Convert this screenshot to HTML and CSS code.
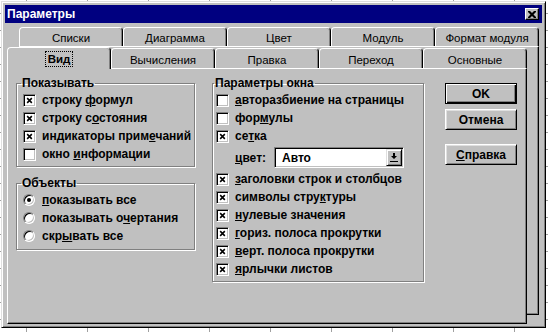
FILE: index.html
```html
<!DOCTYPE html>
<html lang="ru">
<head>
    <meta charset="UTF-8">
    <title>Параметры</title>
    <link rel="stylesheet" href="styles.css">
</head>
<body>
    <div class="window">
        <div class="titlebar">
            <span class="title">Параметры</span>
            <span class="close-btn">
                <svg width="8" height="7" viewBox="0 0 8 7"><path d="M0 0h2l2 2 2-2h2v1l-2.5 2.5 2.5 2.5v1h-2l-2-2-2 2h-2v-1l2.5-2.5-2.5-2.5z" fill="#000"/></svg>
            </span>
        </div>

        <div class="sheets">
            <!-- back row of tabs -->
            <div class="card card-back">
                <div class="tabs">
                    <div class="tab">Списки</div>
                    <div class="tab">Диаграмма</div>
                    <div class="tab">Цвет</div>
                    <div class="tab">Модуль</div>
                    <div class="tab">Формат модуля</div>
                </div>
                <div class="page"></div>
            </div>

            <!-- front row of tabs -->
            <div class="card card-front">
                <div class="tabs tabs-front">
                    <div class="tab tab-active"><span class="focus">Вид</span></div>
                    <div class="tab">Вычисления</div>
                    <div class="tab">Правка</div>
                    <div class="tab">Переход</div>
                    <div class="tab">Основные</div>
                </div>
                <div class="page page-main">
                    <div class="col-left">
                        <fieldset class="group group-left">
                            <legend>Показывать</legend>
                            <div class="row"><span class="cb"><svg viewBox="0 0 9 9"><path d="M1.5 1.5l6 6M7.5 1.5l-6 6"/></svg></span><span>строку <u>ф</u>ормул</span></div>
                            <div class="row"><span class="cb"><svg viewBox="0 0 9 9"><path d="M1.5 1.5l6 6M7.5 1.5l-6 6"/></svg></span><span>строку с<u>о</u>стояния</span></div>
                            <div class="row"><span class="cb"><svg viewBox="0 0 9 9"><path d="M1.5 1.5l6 6M7.5 1.5l-6 6"/></svg></span><span>индикаторы прим<u>е</u>чаний</span></div>
                            <div class="row"><span class="cb"></span><span>окно <u>и</u>нформации</span></div>
                        </fieldset>

                        <fieldset class="group group-left group-objects">
                            <legend>Объекты</legend>
                            <div class="row"><span class="radio on"></span><span><u>п</u>оказывать все</span></div>
                            <div class="row"><span class="radio"></span><span>показывать о<u>ч</u>ертания</span></div>
                            <div class="row"><span class="radio"></span><span>скр<u>ы</u>вать все</span></div>
                        </fieldset>
                    </div>

                    <fieldset class="group group-right">
                        <legend>Параметры окна</legend>
                        <div class="row"><span class="cb"></span><span><u>а</u>вторазбиение на страницы</span></div>
                        <div class="row"><span class="cb"></span><span>фор<u>м</u>улы</span></div>
                        <div class="row"><span class="cb"><svg viewBox="0 0 9 9"><path d="M1.5 1.5l6 6M7.5 1.5l-6 6"/></svg></span><span>се<u>т</u>ка</span></div>
                        <div class="combo-row">
                            <span class="combo-label"><u>ц</u>вет:</span>
                            <span class="combo">
                                <span class="combo-text">Авто</span>
                                <span class="combo-btn">
                                    <svg width="8" height="9" viewBox="0 0 8 9"><path d="M3 0h2v3h2l-3 3-3-3h2z M0 8h8v1h-8z" fill="#000"/></svg>
                                </span>
                            </span>
                        </div>
                        <div class="row"><span class="cb"><svg viewBox="0 0 9 9"><path d="M1.5 1.5l6 6M7.5 1.5l-6 6"/></svg></span><span><u>з</u>аголовки строк и столбцов</span></div>
                        <div class="row"><span class="cb"><svg viewBox="0 0 9 9"><path d="M1.5 1.5l6 6M7.5 1.5l-6 6"/></svg></span><span>символы стру<u>к</u>туры</span></div>
                        <div class="row"><span class="cb"><svg viewBox="0 0 9 9"><path d="M1.5 1.5l6 6M7.5 1.5l-6 6"/></svg></span><span><u>н</u>улевые значения</span></div>
                        <div class="row"><span class="cb"><svg viewBox="0 0 9 9"><path d="M1.5 1.5l6 6M7.5 1.5l-6 6"/></svg></span><span><u>г</u>ориз. полоса прокрутки</span></div>
                        <div class="row"><span class="cb"><svg viewBox="0 0 9 9"><path d="M1.5 1.5l6 6M7.5 1.5l-6 6"/></svg></span><span><u>в</u>ерт. полоса прокрутки</span></div>
                        <div class="row"><span class="cb"><svg viewBox="0 0 9 9"><path d="M1.5 1.5l6 6M7.5 1.5l-6 6"/></svg></span><span><u>я</u>рлычки листов</span></div>
                    </fieldset>

                    <div class="buttons">
                        <button class="btn btn-default">OK</button>
                        <button class="btn">Отмена</button>
                        <button class="btn btn-help"><u>С</u>правка</button>
                    </div>
                </div>
            </div>
        </div>
    </div>
</body>
</html>
```

FILE: styles.css
```css
body {
    margin: 0;
    width: 548px;
    height: 332px;
    overflow: hidden;
    background-color: #fff;
    background-image:
        linear-gradient(to right, #a0a0a0 1px, transparent 1px),
        linear-gradient(to bottom, #a0a0a0 1px, transparent 1px);
    background-size: 61px 17px;
    background-position: 26px 13px;
    font-family: "Liberation Sans", Arial, sans-serif;
    font-size: 11px;
    color: #000;
}
.window {
    margin: 1px 0 0 1px;
    width: 545px;
    height: 327px;
    box-sizing: border-box;
    background: #c0c0c0;
    border: 1px solid;
    border-color: #dfdfdf #000 #000 #dfdfdf;
    box-shadow: inset 1px 1px #fff, inset -1px -1px #808080;
    padding: 3px;
}
.titlebar {
    height: 18px;
    background: #000080;
    display: flex;
    align-items: center;
    justify-content: space-between;
    padding: 0 3px 0 2px;
}
.title {
    color: #fff;
    font-weight: bold;
    font-size: 12px;
}
.close-btn {
    width: 14px;
    height: 12px;
    box-sizing: border-box;
    background: #c0c0c0;
    border: 1px solid;
    border-color: #fff #000 #000 #fff;
    box-shadow: inset -1px -1px #808080;
    display: flex;
    align-items: center;
    justify-content: center;
}
.sheets {
    display: grid;
    padding: 4px 0 0 2px;
}
.card {
    grid-area: 1 / 1;
    display: flex;
    flex-direction: column;
    width: 520px;
}
.card-back {
    margin-left: 12px;
    height: 288px;
}
.card-front {
    margin-top: 20px;
    height: 277px;
}
.tabs {
    display: flex;
    align-items: flex-end;
    height: 19px;
}
.tabs-front {
    height: 21px;
}
.tab {
    width: 104px;
    height: 19px;
    box-sizing: border-box;
    border: 1px solid;
    border-bottom: none;
    border-color: #fff #000 transparent #fff;
    border-radius: 4px 4px 0 0;
    box-shadow: inset -1px 0 #808080;
    display: flex;
    align-items: center;
    justify-content: center;
    padding-top: 2px;
    font-size: 11.5px;
}
.tabs-front .tab {
    height: 20px;
}
.tabs-front .tab-active {
    height: 22px;
    margin-bottom: -1px;
    position: relative;
    z-index: 1;
    background: #c0c0c0;
    font-weight: bold;
    padding-top: 0;
}
.focus {
    border: 1px dotted #000;
    padding: 1px 2px;
}
.page {
    flex: 1;
    border: 1px solid;
    border-color: #fff #000 #000 #fff;
    box-shadow: inset -1px -1px #808080;
    background: #c0c0c0;
}
.page-main {
    display: flex;
    align-items: flex-start;
    padding: 8px 0 0 8px;
}
.col-left {
    width: 179px;
}
.group {
    margin: 0;
    border: 1px solid #808080;
    box-shadow: inset 1px 1px #fff, 1px 1px #fff;
    font-weight: bold;
    font-size: 12px;
}
.group legend {
    padding: 0 1px;
    margin-left: -2px;
    line-height: 13px;
}
.group-left {
    padding: 1px 0 3px 6px;
}
.group-objects {
    margin-top: 10px;
    padding-bottom: 4px;
}
.group-right {
    width: 212px;
    box-sizing: border-box;
    margin-left: 17px;
    padding: 1px 0 3px 3px;
}
.row {
    display: flex;
    align-items: center;
    height: 18px;
    gap: 6px;
    white-space: nowrap;
}
.cb {
    width: 13px;
    height: 13px;
    box-sizing: border-box;
    background: #fff;
    border: 1px solid;
    border-color: #808080 #fff #fff #808080;
    box-shadow: inset 1px 1px #000, inset -1px -1px #c0c0c0;
    padding: 2px;
    flex-shrink: 0;
}
.cb svg {
    display: block;
    width: 7px;
    height: 7px;
    margin: 0;
}
.cb path {
    stroke: #000;
    stroke-width: 2;
    fill: none;
}
.radio {
    width: 12px;
    height: 12px;
    box-sizing: border-box;
    border-radius: 50%;
    background: #fff;
    border: 1px solid;
    border-color: #808080 #fff #fff #808080;
    box-shadow: inset 1px 1px #000, inset -1px -1px #c0c0c0;
    display: flex;
    align-items: center;
    justify-content: center;
    flex-shrink: 0;
    margin-right: 1px;
}
.radio.on::after {
    content: "";
    width: 4px;
    height: 4px;
    border-radius: 50%;
    background: #000;
}
.combo-row {
    display: flex;
    align-items: center;
    height: 25px;
    padding-left: 19px;
}
.combo-label {
    width: 39px;
}
.combo {
    width: 130px;
    height: 21px;
    box-sizing: border-box;
    background: #fff;
    border: 1px solid;
    border-color: #808080 #fff #fff #808080;
    box-shadow: inset 1px 1px #000, inset -1px -1px #c0c0c0;
    display: flex;
    align-items: center;
    justify-content: space-between;
    padding: 1px 1px 1px 7px;
}
.combo-btn {
    width: 16px;
    height: 17px;
    box-sizing: border-box;
    background: #c0c0c0;
    border: 1px solid;
    border-color: #dfdfdf #000 #000 #dfdfdf;
    box-shadow: inset 1px 1px #fff, inset -1px -1px #808080;
    display: flex;
    align-items: center;
    justify-content: center;
}
.buttons {
    display: flex;
    flex-direction: column;
    margin: 6px 0 0 21px;
}
.btn {
    width: 72px;
    height: 21px;
    box-sizing: border-box;
    margin: 0 0 5px;
    padding: 0;
    font-family: inherit;
    font-size: 12px;
    font-weight: bold;
    color: #000;
    background: #c0c0c0;
    border: 1px solid;
    border-color: #fff #000 #000 #fff;
    box-shadow: inset 1px 1px #dfdfdf, inset -1px -1px #808080;
}
.btn-default {
    border-color: #000;
    box-shadow: inset 1px 1px #fff, inset -1px -1px #000, inset -2px -2px #808080;
}
.btn-help {
    margin-top: 9px;
}
u {
    text-decoration-thickness: 1px;
    text-underline-offset: 1px;
}
```
